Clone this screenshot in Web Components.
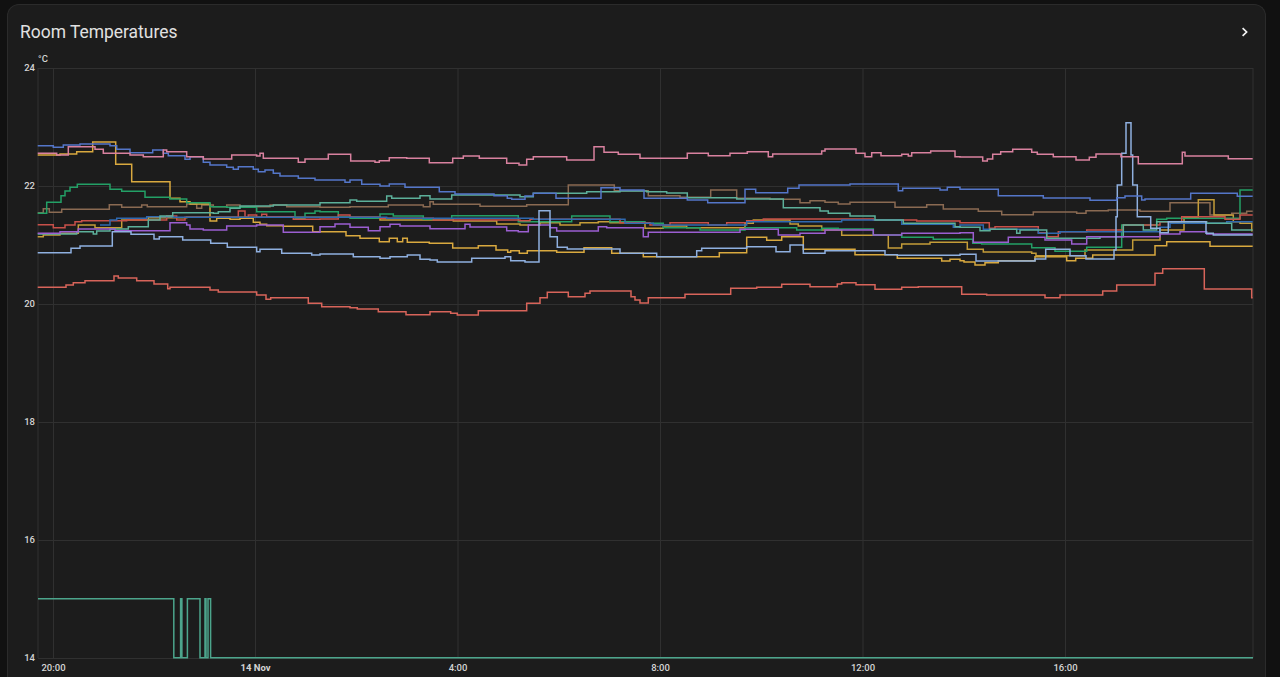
<!DOCTYPE html>
<html lang="en">
<head>
<meta charset="utf-8">
<title>Room Temperatures</title>
<style>
  html, body { margin: 0; height: 100%; overflow: hidden; background: #111111; }
  body { padding: 4px 14px 0 7px; box-sizing: border-box; font-family: Roboto, "Liberation Sans", sans-serif; }
</style>
</head>
<body>
<temp-card>
  <span slot="title">Room Temperatures</span>
  <history-chart></history-chart>
</temp-card>

<script>
// the four crops the lines were read from, each at 3x
const A = [0, 130], B = [320, 130], C = [640, 130], D = [960, 110];

// every series: colour, then [crop, [x, y, x, y, ...]] where y holds until the next x
const SERIES = [
  ['#8a6a52', [
    [A, [113,248, 130,236, 148,247, 185,238, 328,224, 365,232, 425,225, 442,230, 560,222, 590,235, 605,225, 640,230, 680,225, 720,230, 810,225, 860,230]],
    [B, [0,232, 90,230, 205,225, 310,230, 330,215, 340,223, 480,229, 620,224, 745,165, 883,182]],
    [C, [25,197, 120,202, 212,180, 290,205, 390,208, 480,218, 510,212, 555,217, 595,222, 630,217, 765,232, 860,224, 910,237]],
    [D, [55,304, 125,314, 220,306, 350,310, 378,302, 445,300, 540,304, 630,278, 750,315, 815,310, 860,304]]
  ]],
  ['#d9a93f', [
    [A, [113,75, 180,72, 230,65, 278,36, 347,103, 395,155, 510,205, 540,215, 570,222, 630,273, 650,265, 690,268, 720,265, 760,277, 780,283, 800,287, 850,289, 938,305]],
    [B, [0,305, 78,317, 120,325, 178,335, 208,325, 232,335, 248,325, 262,337, 328,340, 398,354, 475,347, 528,360, 563,367, 572,362, 598,370, 622,362, 710,367, 792,353, 875,370]],
    [C, [10,380, 238,368, 320,322, 380,331, 425,320, 490,358, 645,374, 772,385, 905,393, 930,388]],
    [D, [0,452, 12,456, 45,465, 75,458, 115,452, 225,440, 320,452, 347,445, 398,435, 585,407, 620,395, 750,409]]
  ]],
  ['#c49c38', [
    [A, [113,320, 130,315, 180,310, 235,285, 285,293, 365,270, 445,263, 560,262]],
    [B, [180,270, 310,270, 400,273, 530,282, 600,285, 660,278, 720,285, 780,278, 835,275, 870,278]],
    [C, [15,295, 70,288, 140,293, 315,280, 340,270, 450,282, 475,288, 545,300, 605,316, 745,354, 785,342, 870,337]],
    [D, [0,397, 22,418, 70,426, 215,430, 228,437, 375,420, 518,390, 600,360, 672,322, 715,269, 762,315, 820,335, 840,340, 875,362]]
  ]],
  ['#23a066', [
    [A, [113,250, 140,217, 183,197, 195,183, 210,172, 232,163, 330,178, 365,184, 435,202, 510,207, 560,218, 630,230, 680,232, 770,245, 885,265, 915,250, 945,243]],
    [B, [0,245, 55,262, 90,265, 180,252, 220,258, 310,268, 395,257, 595,275, 755,258, 870,275]],
    [C, [15,280, 70,293, 180,300, 315,293, 470,300, 545,295, 595,297, 700,315, 785,322, 880,328]],
    [D, [0,388, 38,400, 65,402, 215,413, 285,424, 380,412, 485,345, 590,328, 620,325, 840,240]]
  ]],
  ['#c8504a', [
    [A, [113,284, 160,293, 195,285, 225,275, 245,272, 380,270, 500,258, 530,270, 555,262, 715,243, 735,262, 745,255, 770,262, 785,253, 800,260, 880,268]],
    [B, [0,267, 55,255, 90,262, 180,265, 340,270, 600,272, 630,268, 900,278]],
    [C, [30,285, 90,278, 205,285, 260,278, 320,272, 370,267, 700,270, 830,273]],
    [D, [0,338, 88,355, 105,350, 235,368, 260,380, 295,365, 380,360, 490,345, 600,335, 665,320, 795,328, 840,315]]
  ]],
  ['#2f69b0', [
    [A, [300,285, 330,270, 350,265, 440,260, 520,262]],
    [B, [200,265, 640,268, 915,280]],
    [C, [40,285, 320,275, 605,270, 785,283, 940,292]],
    [D, [0,345, 70,358, 235,370, 300,365, 600,352, 630,340, 800,335]]
  ]],
  ['#5cb09a', [
    [A, [113,312, 230,305, 280,312, 290,303, 330,297, 385,290, 445,270, 480,258, 518,248, 640,250, 655,245, 690,235, 720,228, 820,225]],
    [B, [0,218, 90,210, 110,214, 200,198, 215,205, 300,197, 330,207, 395,195, 600,200, 640,190, 800,185, 900,183]],
    [C, [20,185, 80,189, 142,203, 290,207, 430,233, 540,243, 565,250, 630,258, 705,270, 790,280, 945,290]],
    [D, [0,352, 60,362, 90,358, 170,370, 180,360, 260,385, 420,380, 490,345, 550,360, 590,335, 740,340, 815,360]]
  ]],
  ['#9b5ed1', [
    [A, [113,310, 180,305, 235,297, 345,302, 510,278, 560,285, 570,297, 610,300, 680,288, 770,285, 850,307]],
    [B, [0,290, 45,282, 90,292, 145,302, 180,290, 210,283, 240,288, 330,296, 435,283, 450,291, 560,302, 595,305, 625,285, 690,293, 710,303, 835,290, 860,293]],
    [C, [10,320, 25,307, 300,298, 415,315, 480,310, 555,300, 700,315, 785,310]],
    [D, [0,368, 40,397, 145,382, 255,390, 335,402, 380,380, 600,372, 660,365, 740,372]]
  ]],
  ['#8fb0e0', [
    [A, [113,368, 213,355, 240,348, 337,305, 393,313, 462,327, 478,320, 548,330, 632,340, 682,352, 770,365, 780,358, 845,370, 935,375]],
    [B, [0,372, 100,380, 180,385, 210,380, 262,375, 300,388, 330,390, 352,396, 455,385, 555,380, 572,392, 615,396, 657,242, 690,320, 712,352, 742,357, 900,370]],
    [C, [50,380, 170,362, 185,355, 320,350, 408,365, 450,345, 490,370, 555,362, 735,374, 772,376]],
    [D, [0,433, 48,453, 225,447, 257,418, 330,437, 378,447, 462,420, 468,320, 472,225, 485,130, 498,38, 513,135, 518,225, 532,320, 572,355, 600,368, 625,335, 738,370, 760,375]]
  ]],
  ['#5476c9', [
    [A, [113,47, 160,52, 190,45, 240,42, 330,47, 350,58, 390,68, 458,60, 490,70, 505,77, 555,88, 570,80, 610,97, 630,105, 680,112, 700,118, 715,110, 760,118, 775,125, 795,120, 820,130, 840,138, 895,145, 945,150]],
    [B, [75,157, 90,150, 125,163, 180,168, 208,162, 255,172, 358,185, 405,192, 522,197, 562,205, 575,208, 615,198, 640,190, 708,205, 843,173, 900,180]],
    [C, [12,205, 142,210, 203,218, 315,178, 347,188, 443,175, 477,165, 630,162, 775,182, 788,175, 900,180, 922,172]],
    [D, [0,238, 115,257, 250,264, 390,271, 470,263, 495,258, 545,270, 555,267, 692,250, 832,259]]
  ]],
  ['#d9819f', [
    [A, [113,70, 170,75, 205,50, 285,58, 310,70, 390,75, 430,80, 490,60, 500,65, 560,80, 610,87, 695,75, 770,78, 780,70, 790,85, 895,97, 915,87]],
    [B, [25,73, 92,93, 165,97, 178,92, 208,83, 260,85, 328,98, 398,85, 430,78, 478,85, 560,100, 597,105, 620,88, 640,80, 740,90, 822,50, 852,67, 895,73]],
    [C, [0,85, 142,70, 205,77, 270,70, 322,65, 385,80, 398,72, 545,63, 555,57, 648,70, 675,80, 695,68, 723,77, 785,73, 805,78, 815,68, 872,63, 945,80]],
    [D, [0,141, 68,153, 82,147, 98,133, 122,125, 158,118, 215,127, 232,133, 280,140, 348,150, 388,142, 408,132, 483,140, 535,161, 667,127, 675,138, 805,146]]
  ]],
  ['#d8645a', [
    [A, [113,472, 198,465, 220,458, 255,452, 342,438, 355,444, 410,452, 462,462, 503,476, 510,472, 630,480, 655,486, 770,495, 798,508, 812,503, 925,520]],
    [B, [5,530, 90,533, 112,537, 175,545, 258,554, 330,545, 392,550, 412,555, 475,542, 620,520, 660,503, 682,487, 745,500, 795,490, 810,483, 933,500, 945,510]],
    [C, [0,519, 25,503, 135,493, 272,475, 350,472, 425,463, 510,470, 592,462, 605,458, 648,464, 705,478, 785,472, 835,470]],
    [D, [0,530, 5,553, 80,555, 255,563, 300,555, 428,543, 470,525, 585,490, 608,476, 733,537, 875,563]]
  ]]
];

// the sensor that sits at the bottom of the scale, in page pixels
const LOW_SENSOR = 'M38 598.7H173.8V657.7H180.6V598.7H181.9V657.7H187.4V598.7H200V657.7H205V598.7H206V657.7H208V598.7H210.6V657.7H1253';

function seriesPath(chunks) {
  let d = '';
  chunks.forEach(([[ox, oy], pts]) => {
    for (let i = 0; i < pts.length; i += 2) {
      const x = (ox + pts[i] / 3).toFixed(1);
      const y = (oy + pts[i + 1] / 3).toFixed(1);
      d += d ? `H${x}V${y}` : `M${x} ${y}`;
    }
  });
  return d + 'H1252.7';
}

class TempCard extends HTMLElement {
  constructor() {
    super();
    this.attachShadow({ mode: 'open' });
  }

  connectedCallback() {
    this.shadowRoot.innerHTML = `
      <style>
        :host {
          display: block;
          height: 673px;
          box-sizing: border-box;
          background: #1c1c1c;
          border: 1px solid #2b2b2b;
          border-bottom: none;
          border-radius: 12px 12px 0 0;
          color: #e1e1e1;
          overflow: hidden;
        }
        header {
          display: flex;
          align-items: center;
          justify-content: space-between;
          height: 49px;
          padding: 4px 12px 0 12px;
          box-sizing: border-box;
        }
        .title {
          font-size: 17.45px;
          line-height: 24px;
          font-weight: 400;
        }
        svg { display: block; }
      </style>
      <header>
        <div class="title"><slot name="title"></slot></div>
        <svg width="16" height="16" viewBox="0 0 16 16" fill="none" stroke="#f2f2f2" stroke-width="1.7">
          <path d="M5.6 4.2L9.6 8L5.6 11.8"/>
        </svg>
      </header>
      <slot></slot>
    `;
  }
}

class HistoryChart extends HTMLElement {
  constructor() {
    super();
    this.attachShadow({ mode: 'open' });
  }

  connectedCallback() {
    const ys = [[24, 68], [22, 186], [20, 304], [18, 422], [16, 540], [14, 658]];
    const xs = [[53.5, '20:00'], [255.5, '14 Nov', true], [458, '4:00'], [660.5, '8:00'], [863, '12:00'], [1065.5, '16:00']];

    const hLines = ys.map(([, y]) => `<path class="grid" d="M38 ${y + 0.5}H1253"/>`).join('');
    const vLines = [[38], [1253], ...xs].map(([x]) => `<path class="grid" d="M${x} 68V658"/>`).join('');
    const yLabels = ys.map(([v, y]) => `<text class="tick" x="35" y="${y + 3}" text-anchor="end">${v}</text>`).join('');
    const xLabels = xs.map(([x, label, bold]) =>
      `<text class="tick${bold ? ' bold' : ''}" x="${x}" y="671" text-anchor="middle">${label}</text>`).join('');
    const lines = SERIES.map(([color, chunks]) => `<path class="line" stroke="${color}" d="${seriesPath(chunks)}"/>`).join('');

    this.shadowRoot.innerHTML = `
      <style>
        :host { display: block; }
        svg { display: block; }
        .grid { stroke: #303030; stroke-width: 1; fill: none; }
        .line { fill: none; stroke-width: 1.5; stroke-linejoin: miter; }
        .tick { font: 500 9.5px Roboto, "Liberation Sans", sans-serif; fill: #d4d4d4; }
        .bold { font-weight: 700; }
      </style>
      <svg width="1256" height="618" viewBox="8 54 1256 618" style="overflow: visible">
        ${hLines}${vLines}
        ${lines}
        <path class="line" stroke="#4ca58c" d="${LOW_SENSOR}"/>
        ${yLabels}${xLabels}
        <text class="tick" x="38" y="62">°C</text>
      </svg>
    `;
  }
}

customElements.define('temp-card', TempCard);
customElements.define('history-chart', HistoryChart);
</script>
</body>
</html>
